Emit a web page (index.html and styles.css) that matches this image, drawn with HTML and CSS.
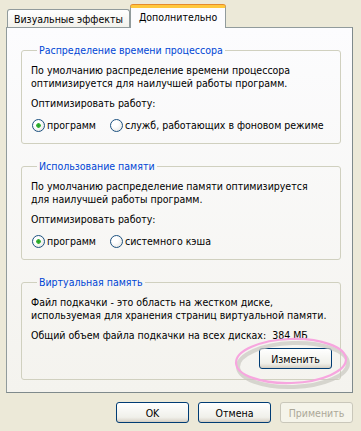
FILE: index.html
```html
<!DOCTYPE html>
<html lang="ru">
<head>
    <meta charset="UTF-8">
    <title>Свойства системы</title>
    <link rel="stylesheet" href="styles.css">
</head>
<body>

    <div class="dialog">
        <div class="tabs">
            <div class="tab">Визуальные эффекты</div>
            <div class="tab active">Дополнительно</div>
        </div>

        <div class="page">
            <fieldset class="group">
                <legend>Распределение времени процессора</legend>
                <p class="text">По умолчанию распределение времени процессора<br>оптимизируется для наилучшей работы программ.</p>
                <p class="text label">Оптимизировать работу:</p>
                <div class="radios">
                    <label class="radio"><span class="dot checked"></span>программ</label>
                    <label class="radio"><span class="dot"></span>служб, работающих в фоновом режиме</label>
                </div>
            </fieldset>

            <fieldset class="group">
                <legend>Использование памяти</legend>
                <p class="text">По умолчанию распределение памяти оптимизируется<br>для наилучшей работы программ.</p>
                <p class="text label">Оптимизировать работу:</p>
                <div class="radios">
                    <label class="radio"><span class="dot checked"></span>программ</label>
                    <label class="radio"><span class="dot"></span>системного кэша</label>
                </div>
            </fieldset>

            <fieldset class="group last">
                <legend>Виртуальная память</legend>
                <p class="text">Файл подкачки - это область на жестком диске,<br>используемая для хранения страниц виртуальной памяти.</p>
                <p class="text label">Общий объем файла подкачки на всех дисках:&nbsp; 384 МБ</p>
                <div class="group-actions">
                    <button class="btn">Изменить</button>
                </div>
            </fieldset>
        </div>

        <div class="footer">
            <button class="btn">OK</button>
            <button class="btn">Отмена</button>
            <button class="btn" disabled>Применить</button>
        </div>
    </div>

    <!-- hand drawn highlight round the button -->
    <svg class="highlight" width="124" height="60" viewBox="0 0 124 60">
        <ellipse cx="62" cy="29" rx="55" ry="22" fill="none" stroke="#c9c7c0" stroke-width="4" opacity="0.7" transform="translate(2 3) rotate(-2 62 29)"/>
        <ellipse cx="62" cy="28" rx="55" ry="22" fill="none" stroke="#f7a6df" stroke-width="2.2" transform="rotate(-2 62 28)"/>
    </svg>

</body>
</html>
```

FILE: styles.css
```css
body {
    margin: 0;
    background: #ece9d8;
    font-family: 'DejaVu Sans Condensed', 'DejaVu Sans', Verdana, sans-serif;
    font-size: 10.5px;
    color: #000;
    position: relative;
    width: 361px;
    height: 431px;
    overflow: hidden;
}
.dialog {
    padding: 6px 0 0 6px;
}
.tabs {
    display: flex;
    align-items: flex-end;
    height: 21px;
    padding-left: 1px;
}
.tab {
    height: 18px;
    line-height: 18px;
    padding: 0 6px;
    border: 1px solid #919b9c;
    border-bottom: none;
    border-radius: 3px 3px 0 0;
    background: linear-gradient(#ffffff, #f3f2ec);
    box-sizing: border-box;
    white-space: nowrap;
}
.tab.active {
    position: relative;
    z-index: 1;
    height: 23px;
    line-height: 19px;
    margin-bottom: -1px;
    padding: 0 8px;
    background: #fcfcfe;
    border-top: 3px solid #ffc83c;
    box-shadow: inset 0 1px 0 #fcfcfe, 0 -1px 0 #e68b2c;
}
.page {
    width: 347px;
    height: 366px;
    box-sizing: border-box;
    border: 1px solid #919b9c;
    border-right-color: #7f8a8c;
    border-bottom-color: #7f8a8c;
    background: linear-gradient(#fcfcfe, #f4f3ee);
    padding: 0 0 0 14px;
}
.group {
    width: 320px;
    box-sizing: border-box;
    margin: 16px 0 0 0;
    padding: 7px 8px 11px 9px;
    border: 1px solid #d0d0bf;
    border-radius: 3px;
    min-width: 0;
}
.group legend {
    color: #0046d5;
    line-height: 13px;
    padding: 0 2px;
    margin-left: 6px;
}
.group.last {
    padding-bottom: 10px;
}
.text {
    margin: 0;
    line-height: 13px;
    white-space: nowrap;
}
.text.label {
    margin-top: 7px;
}
.radios {
    display: flex;
    margin-top: 9px;
    height: 13px;
}
.radio {
    display: flex;
    align-items: center;
    gap: 2px;
    line-height: 13px;
    margin-left: 1px;
    width: 78px;
    white-space: nowrap;
}
.radio:last-child {
    width: auto;
    margin-left: 0;
}
.dot {
    width: 13px;
    height: 13px;
    box-sizing: border-box;
    border: 1px solid #1c5180;
    border-radius: 50%;
    background: radial-gradient(circle at 35% 35%, #ffffff 30%, #e0e0dc 100%);
}
.dot.checked {
    background: radial-gradient(circle, #21a121 0, #3cb43c 2px, transparent 2.6px), radial-gradient(circle at 35% 35%, #ffffff 30%, #e0e0dc 100%);
}
.group-actions {
    display: flex;
    justify-content: flex-end;
    margin-top: 6px;
}
.btn {
    width: 73px;
    height: 21px;
    padding: 0;
    font-family: inherit;
    font-size: inherit;
    color: #000;
    border: 1px solid #003c74;
    border-radius: 3px;
    background: linear-gradient(#ffffff, #f0f0ea 75%, #d6d0c5);
    box-shadow: inset 0 -1px 0 #d6d0c5;
}
.btn:disabled {
    color: #aca899;
    border-color: #c9c7ba;
    background: #f5f4ea;
    box-shadow: none;
}
.footer {
    display: flex;
    justify-content: flex-end;
    gap: 9px;
    width: 347px;
    margin-top: 9px;
}
.highlight {
    position: absolute;
    left: 229px;
    top: 333px;
}
```
